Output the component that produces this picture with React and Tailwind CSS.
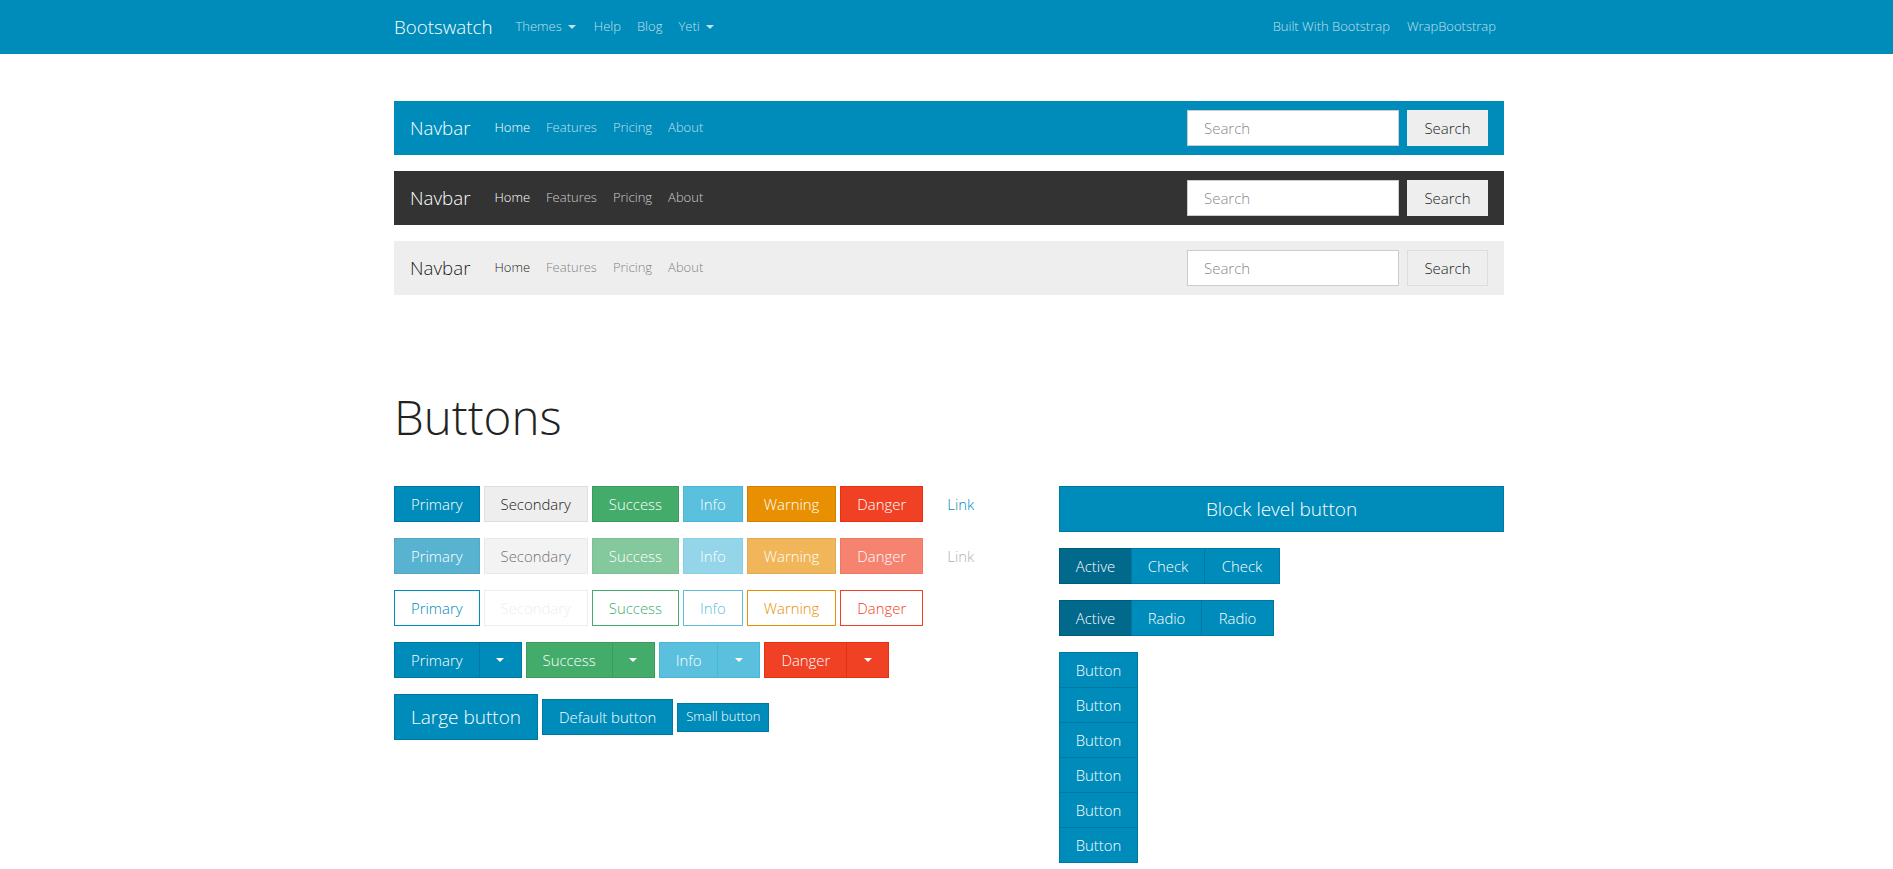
import clsx from 'clsx'

const SOLID = {
  primary: 'bg-[#008cba] border-[#0079a1] text-white',
  secondary: 'bg-[#eeeeee] border-[#dedede] text-[#222222]',
  success: 'bg-[#43ac6a] border-[#3c9a5f] text-white',
  info: 'bg-[#5bc0de] border-[#46b8da] text-white',
  warning: 'bg-[#e99002] border-[#d08002] text-white',
  danger: 'bg-[#f04124] border-[#ea2f10] text-white',
}

const OUTLINE = {
  primary: 'bg-white border-[#008cba] text-[#008cba]',
  secondary: 'bg-white border-[#eeeeee] text-[#eeeeee]',
  success: 'bg-white border-[#43ac6a] text-[#43ac6a]',
  info: 'bg-white border-[#5bc0de] text-[#5bc0de]',
  warning: 'bg-white border-[#e99002] text-[#e99002]',
  danger: 'bg-white border-[#f04124] text-[#f04124]',
}

const TOGGLE_BORDER = {
  primary: 'border-l-[#0079a1]',
  success: 'border-l-[#3c9a5f]',
  info: 'border-l-[#46b8da]',
  danger: 'border-l-[#ea2f10]',
}

const LABELS = [
  ['primary', 'Primary'],
  ['secondary', 'Secondary'],
  ['success', 'Success'],
  ['info', 'Info'],
  ['warning', 'Warning'],
  ['danger', 'Danger'],
]

function Caret({ className }) {
  return (
    <span
      className={clsx(
        'inline-block w-0 h-0 border-l-[4px] border-r-[4px] border-t-[4px] border-l-transparent border-r-transparent border-t-current',
        className,
      )}
    />
  )
}

function Btn({ className, children }) {
  return (
    <button className={clsx('h-[36px] px-4 border text-[14.9px] leading-none flex items-center justify-center', className)}>
      {children}
    </button>
  )
}

function DemoNavbar({ variant }) {
  const styles = {
    primary: {
      bar: 'bg-[#008cba]',
      brand: 'text-white',
      active: 'text-white',
      link: 'text-white/75',
      btn: 'border-[#eeeeee]',
    },
    dark: {
      bar: 'bg-[#333333]',
      brand: 'text-white',
      active: 'text-white',
      link: 'text-white/75',
      btn: 'border-[#eeeeee]',
    },
    light: {
      bar: 'bg-[#eeeeee]',
      brand: 'text-black/90',
      active: 'text-black/90',
      link: 'text-black/50',
      btn: 'border-[#dddddd]',
    },
  }[variant]

  return (
    <nav className={clsx('h-[54px] flex items-center px-4', styles.bar)}>
      <span className={clsx('text-[18.75px] mr-4', styles.brand)}>Navbar</span>
      <ul className="flex items-center text-[13px]">
        <li className={clsx('px-2', styles.active)}>Home</li>
        <li className={clsx('px-2', styles.link)}>Features</li>
        <li className={clsx('px-2', styles.link)}>Pricing</li>
        <li className={clsx('px-2', styles.link)}>About</li>
      </ul>
      <form className="ml-auto flex items-center gap-2">
        <input
          placeholder="Search"
          className="w-[212px] h-[36px] px-4 bg-white border border-[#cccccc] text-[15px] font-light placeholder:text-[#888888] outline-none"
        />
        <button className={clsx('w-[81px] h-[36px] bg-[#eeeeee] border text-[15px] text-[#222222]', styles.btn)}>
          Search
        </button>
      </form>
    </nav>
  )
}

export default function App() {
  return (
    <div className="min-h-screen bg-white font-['Open_Sans',sans-serif] font-light text-[#222222]">
      {/* Top bar */}
      <header className="h-[54px] bg-[#008cba]">
        <div className="w-[1110px] ml-[394px] h-full flex items-center">
          <span className="text-[18.75px] text-white mr-4">Bootswatch</span>
          <ul className="flex items-center text-[13px] text-white/75">
            <li className="pl-[7px] pr-[9px] flex items-center gap-[6px]">
              Themes <Caret />
            </li>
            <li className="pl-[9px] pr-2">Help</li>
            <li className="px-2">Blog</li>
            <li className="px-2 flex items-center gap-[6px]">
              Yeti <Caret />
            </li>
          </ul>
          <ul className="ml-auto flex items-center text-[13px] text-white/75">
            <li className="px-[9px]">Built With Bootstrap</li>
            <li className="px-2">WrapBootstrap</li>
          </ul>
        </div>
      </header>

      <main className="w-[1110px] ml-[394px] pt-[47px]">
        {/* Navbars */}
        <div className="flex flex-col gap-4">
          <DemoNavbar variant="primary" />
          <DemoNavbar variant="dark" />
          <DemoNavbar variant="light" />
        </div>

        {/* Buttons */}
        <h1 className="mt-[94px] h-[56px] text-[47.5px] leading-[56px] font-light text-[#222222]">Buttons</h1>

        <div className="mt-[41px] flex">
          <div className="w-[665px] pr-[30px]">
            <div className="flex gap-1 mb-4">
              {LABELS.map(([k, label]) => (
                <Btn key={k} className={SOLID[k]}>{label}</Btn>
              ))}
              <Btn className="border-transparent text-[#008cba] px-[19px]">Link</Btn>
            </div>

            <div className="flex gap-1 mb-4">
              {LABELS.map(([k, label]) => (
                <Btn key={k} className={clsx(SOLID[k], 'opacity-65')}>{label}</Btn>
              ))}
              <Btn className="border-transparent text-[#888888] opacity-65 px-[19px]">Link</Btn>
            </div>

            <div className="flex gap-1 mb-4">
              {LABELS.map(([k, label]) => (
                <Btn key={k} className={OUTLINE[k]}>{label}</Btn>
              ))}
            </div>

            <div className="flex gap-1 mb-4">
              {['primary', 'success', 'info', 'danger'].map(k => (
                <div key={k} className="flex">
                  <Btn className={clsx(SOLID[k], 'border-r-0')}>
                    {LABELS.find(l => l[0] === k)[1]}
                  </Btn>
                  <Btn className={clsx(SOLID[k], TOGGLE_BORDER[k], 'w-[43px] px-0')}>
                    <Caret />
                  </Btn>
                </div>
              ))}
            </div>

            <div className="flex items-center gap-1">
              <button className="h-[46px] px-4 border bg-[#008cba] border-[#0079a1] text-white text-[19px]">
                Large button
              </button>
              <Btn className={SOLID.primary}>Default button</Btn>
              <button className="h-[29px] px-2 border bg-[#008cba] border-[#0079a1] text-white text-[13px]">
                Small button
              </button>
            </div>
          </div>

          <div className="flex-1 flex flex-col items-start gap-4">
            <button className="w-full h-[46px] border bg-[#008cba] border-[#0079a1] text-white text-[19px]">
              Block level button
            </button>

            <div className="flex">
              <Btn className="bg-[#00698c] border-[#005b7a] text-white w-[73px] px-0">Active</Btn>
              <Btn className={clsx(SOLID.primary, '-ml-px w-[74px] px-0')}>Check</Btn>
              <Btn className={clsx(SOLID.primary, '-ml-px w-[76px] px-0')}>Check</Btn>
            </div>

            <div className="flex">
              <Btn className="bg-[#00698c] border-[#005b7a] text-white w-[73px] px-0">Active</Btn>
              <Btn className={clsx(SOLID.primary, '-ml-px w-[71px] px-0')}>Radio</Btn>
              <Btn className={clsx(SOLID.primary, '-ml-px w-[73px] px-0')}>Radio</Btn>
            </div>

            <div className="flex flex-col">
              {[0, 1, 2, 3, 4, 5].map(i => (
                <Btn key={i} className={clsx(SOLID.primary, 'w-[79px] px-0', i > 0 && '-mt-px')}>
                  Button
                </Btn>
              ))}
            </div>
          </div>
        </div>
      </main>
    </div>
  )
}
